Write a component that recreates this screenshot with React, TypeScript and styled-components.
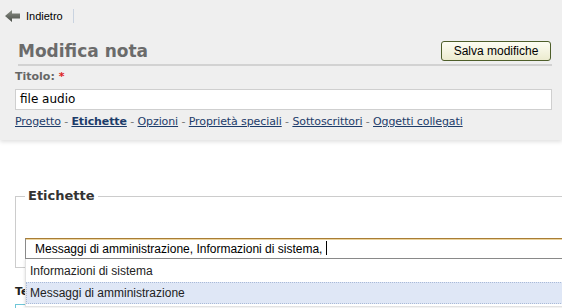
import React from "react";
import styled, { createGlobalStyle } from "styled-components";

const GlobalStyle = createGlobalStyle`
  html, body {
    margin: 0;
    padding: 0;
    overflow: hidden;
    background: #fff;
  }
  body {
    font-family: "DejaVu Sans", Verdana, sans-serif;
    font-size: 11px;
  }
`;

const Header = styled.div`
  background: #efefef;
  padding-bottom: 11px;
  box-shadow: 0 2px 4px rgba(0, 0, 0, 0.12);
  position: relative;
`;

const TopBar = styled.div`
  height: 32px;
  display: flex;
  align-items: center;
  padding-left: 5px;
`;

const BackLink = styled.a`
  display: flex;
  align-items: center;
  gap: 5px;
  font-family: "Liberation Sans", Arial, sans-serif;
  font-size: 11px;
  color: #000;
  text-decoration: none;
  padding-right: 10px;
  border-right: 1px solid #c9d3e0;
  height: 14px;
`;

const TitleRow = styled.div`
  margin: 2px 10px 0 18px;
  height: 27px;
  padding-bottom: 3px;
  display: flex;
  align-items: flex-end;
  justify-content: space-between;
  border-bottom: 2px solid #d2d2d2;
`;

const Heading = styled.h1`
  margin: 0;
  font-family: "DejaVu Sans", Verdana, sans-serif;
  font-size: 17px;
  line-height: 20px;
  font-weight: bold;
  color: #6b6b6b;
`;

const SaveButton = styled.button`
  font-family: "Liberation Sans", Arial, sans-serif;
  font-size: 12px;
  color: #000;
  height: 20px;
  width: 110px;
  padding: 0;
  margin-right: 1px;
  border: 1px solid #4e5e2a;
  border-radius: 3px;
  background: linear-gradient(#fdfdf3, #ecebcf);
`;

const Form = styled.div`
  padding: 0 10px 0 15px;
`;

const Label = styled.div`
  font-family: "DejaVu Sans", Verdana, sans-serif;
  font-size: 11px;
  font-weight: bold;
  line-height: 14px;
  color: #666;
  margin-top: 4px;
`;

const Required = styled.span`
  color: #d22;
`;

const TextInput = styled.div`
  margin-top: 5px;
  height: 19px;
  background: #fff;
  border: 1px solid #cfcfcf;
  font-family: "DejaVu Sans", Verdana, sans-serif;
  font-size: 12px;
  line-height: 19px;
  padding-left: 4px;
  color: #000;
`;

const Tabs = styled.nav`
  margin-top: 5px;
  line-height: 14px;
  font-size: 11px;
  letter-spacing: -0.1px;
  color: #777;
`;

const Tab = styled.a<{ $active?: boolean }>`
  color: #1d3c6a;
  text-decoration: underline;
  font-weight: ${(p) => (p.$active ? "bold" : "normal")};
`;

const Main = styled.div`
  padding: 48px 0 0 15px;
  width: 620px;
`;

const Fieldset = styled.fieldset`
  margin: 0;
  border: 1px solid #cccccc;
  padding: 34px 0 8px 0;
`;

const Legend = styled.legend`
  font-family: "DejaVu Sans", Verdana, sans-serif;
  font-size: 13px;
  font-weight: bold;
  color: #333;
  line-height: 16px;
  padding: 0 3px;
  margin-left: 9px;
`;

const Autocomplete = styled.div`
  position: relative;
  margin-left: 9px;
`;

const TagInput = styled.div`
  height: 19px;
  border: 1px solid #8a8a8a;
  border-top-color: #a97d35;
  box-shadow: inset 0 1px 0 #ecd49f;
  background: #fff;
  font-family: "Liberation Sans", Arial, sans-serif;
  font-size: 12px;
  line-height: 20px;
  padding-left: 9px;
  color: #000;
  white-space: nowrap;
`;

const Caret = styled.span`
  display: inline-block;
  width: 1px;
  height: 14px;
  background: #000;
  vertical-align: -2px;
`;

const Dropdown = styled.ul`
  position: absolute;
  left: 0;
  right: 0;
  top: 100%;
  margin: 0;
  padding: 1px 0 2px;
  list-style: none;
  background: #fff;
  border: 1px solid #e2e2e2;
  border-top: none;
  box-shadow: -1px 1px 2px rgba(0, 0, 0, 0.08);
  z-index: 2;
`;

const Option = styled.li<{ $selected?: boolean }>`
  height: 20px;
  line-height: 20px;
  padding-left: 3px;
  font-family: "Liberation Sans", Arial, sans-serif;
  font-size: 12px;
  color: #222;
  background: ${(p) => (p.$selected ? "#dfe7f6" : "#fff")};
  border: 1px dotted ${(p) => (p.$selected ? "#a9bad8" : "transparent")};
  border-right: none;
`;

const BodyLabel = styled(Label)`
  color: #222;
  margin-top: 17px;
`;

const TextArea = styled.div`
  margin-top: 5px;
  height: 60px;
  border: 1px solid #6fc7d8;
`;

const BackArrow = () => (
  <svg width="16" height="12" viewBox="0 0 16 12">
    <defs>
      <linearGradient id="ag" x1="0" y1="0" x2="0" y2="1">
        <stop offset="0" stopColor="#8a8f86" />
        <stop offset="1" stopColor="#4a4e48" />
      </linearGradient>
    </defs>
    <polygon
      points="0,6 7,0 7,3.5 15,3.5 15,8.5 7,8.5 7,12"
      fill="url(#ag)"
    />
  </svg>
);

const tabs = [
  "Progetto",
  "Etichette",
  "Opzioni",
  "Proprietà speciali",
  "Sottoscrittori",
  "Oggetti collegati",
];

export default function App() {
  return (
    <>
      <GlobalStyle />
      <Header>
        <TopBar>
          <BackLink href="#">
            <BackArrow />
            Indietro
          </BackLink>
        </TopBar>
        <TitleRow>
          <Heading>Modifica nota</Heading>
          <SaveButton type="button">Salva modifiche</SaveButton>
        </TitleRow>
        <Form>
          <Label>
            Titolo: <Required>*</Required>
          </Label>
          <TextInput>file audio</TextInput>
          <Tabs>
            {tabs.map((t, i) => (
              <React.Fragment key={t}>
                {i > 0 && " - "}
                <Tab href="#" $active={t === "Etichette"}>
                  {t}
                </Tab>
              </React.Fragment>
            ))}
          </Tabs>
        </Form>
      </Header>
      <Main>
        <Fieldset>
          <Legend>Etichette</Legend>
          <Autocomplete>
            <TagInput>
              Messaggi di amministrazione, Informazioni di sistema, <Caret />
            </TagInput>
            <Dropdown>
              <Option>Informazioni di sistema</Option>
              <Option $selected>Messaggi di amministrazione</Option>
            </Dropdown>
          </Autocomplete>
        </Fieldset>
        <BodyLabel>Testo</BodyLabel>
        <TextArea />
      </Main>
    </>
  );
}
